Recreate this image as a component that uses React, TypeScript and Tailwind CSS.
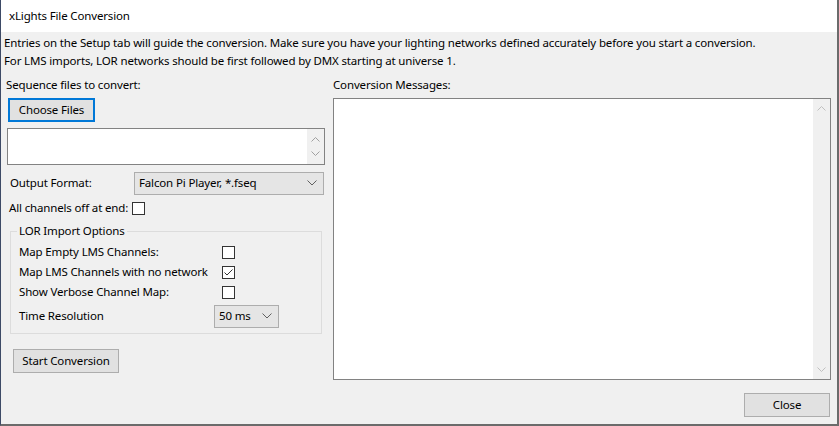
import React from 'react';

function ChevronDown({ className = '' }: { className?: string }) {
  return (
    <svg width="10" height="6" viewBox="0 0 10 6" className={className}>
      <path d="M0.5 0.5 L5 5 L9.5 0.5" fill="none" stroke="#606060" strokeWidth="1" />
    </svg>
  );
}

function ChevronUp({ color = '#a0a0a0' }: { color?: string }) {
  return (
    <svg width="9" height="5" viewBox="0 0 9 5">
      <path d="M0.5 4.5 L4.5 0.5 L8.5 4.5" fill="none" stroke={color} strokeWidth="1" />
    </svg>
  );
}

function ChevronSmallDown({ color = '#a0a0a0' }: { color?: string }) {
  return (
    <svg width="9" height="5" viewBox="0 0 9 5">
      <path d="M0.5 0.5 L4.5 4.5 L8.5 0.5" fill="none" stroke={color} strokeWidth="1" />
    </svg>
  );
}

function CheckBox({ checked = false }: { checked?: boolean }) {
  return (
    <span className="w-[13px] h-[13px] border border-[#333333] bg-white flex items-center justify-center">
      {checked && (
        <svg width="11" height="11" viewBox="0 0 11 11">
          <path d="M1.5 5.5 L4 8 L9.5 2.5" fill="none" stroke="#333333" strokeWidth="1" />
        </svg>
      )}
    </span>
  );
}

function Select({ value, className = '' }: { value: string; className?: string }) {
  return (
    <div
      className={`h-[23px] bg-[#e5e5e5] border border-[#adadad] flex items-center justify-between pl-[4px] pr-[6px] ${className}`}
    >
      <span>{value}</span>
      <ChevronDown />
    </div>
  );
}

const options = [
  { label: 'Map Empty LMS Channels:', checked: false },
  { label: 'Map LMS Channels with no network', checked: true },
  { label: 'Show Verbose Channel Map:', checked: false },
];

export default function App() {
  return (
    <div
      className="w-[839px] h-[426px] flex flex-col bg-[#f0f0f0] border-r-2 border-b-2 border-l border-r-[#6b6b6b] border-b-[#6b6b6b] border-l-[#3d4a66] text-[11.5px] tracking-[-0.15px] text-black"
      style={{ fontFamily: '"Segoe UI", "Noto Sans", sans-serif' }}
    >
      <div className="h-[32px] bg-white flex items-center pl-[8px] shrink-0">xLights File Conversion</div>

      <div className="flex flex-col pl-[3px] pt-[2px]">
        <div className="h-[18px] leading-[18px] whitespace-nowrap">
          Entries on the Setup tab will guide the conversion. Make sure you have your lighting networks defined accurately before you start a conversion.
        </div>
        <div className="h-[18px] leading-[18px]">
          For LMS imports, LOR networks should be first followed by DMX starting at universe 1.
        </div>
      </div>

      <div className="flex flex-1 pt-[7px]">
        <div className="w-[329px] flex flex-col pl-[2px]">
          <div className="h-[16px] leading-[16px] pl-[3px]">Sequence files to convert:</div>
          <div className="pl-[5px] pt-[5px]">
            <button className="w-[87px] h-[24px] bg-[#e1e1e1] border-2 border-[#0078d7] flex items-center justify-center">
              Choose Files
            </button>
          </div>
          <div className="ml-[4px] mt-[6px] w-[318px] h-[37px] bg-white border border-[#828282] flex justify-end">
            <div className="w-[17px] bg-[#f0f0f0] flex flex-col items-center justify-between py-[8px]">
              <ChevronUp />
              <ChevronSmallDown />
            </div>
          </div>

          <div className="flex items-center mt-[6px] h-[24px]">
            <span className="w-[131px] pl-[7px]">Output Format:</span>
            <Select value="Falcon Pi Player, *.fseq" className="w-[190px]" />
          </div>

          <div className="flex items-center mt-[3px] h-[20px] pl-[6px] gap-[4px]">
            <span>All channels off at end:</span>
            <CheckBox />
          </div>

          <div className="relative ml-[7px] mt-[13px] w-[312px] h-[103px] border border-[#dcdcdc]">
            <span className="absolute -top-[10px] left-[6px] px-[2px] bg-[#f0f0f0] leading-[18px]">
              LOR Import Options
            </span>
            <div className="flex flex-col pt-[10px] pl-[8px]">
              {options.map((o) => (
                <div key={o.label} className="flex items-center h-[20px]">
                  <span className="w-[203px] whitespace-nowrap">{o.label}</span>
                  <CheckBox checked={o.checked} />
                </div>
              ))}
              <div className="flex items-center h-[24px] mt-[2px]">
                <span className="w-[195px]">Time Resolution</span>
                <Select value="50 ms" className="w-[65px]" />
              </div>
            </div>
          </div>

          <div className="pl-[10px] pt-[15px]">
            <button className="w-[106px] h-[24px] bg-[#e1e1e1] border border-[#adadad] flex items-center justify-center">
              Start Conversion
            </button>
          </div>
        </div>

        <div className="flex-1 flex flex-col pl-[3px] pr-[6px]">
          <div className="h-[16px] leading-[16px]">Conversion Messages:</div>
          <div className="mt-[5px] h-[282px] bg-white border border-[#828282] flex justify-end">
            <div className="w-[17px] bg-[#f0f0f0] flex flex-col items-center justify-between py-[7px]">
              <ChevronUp color="#c0c0c0" />
              <ChevronSmallDown color="#c0c0c0" />
            </div>
          </div>
          <div className="flex justify-end mt-[13px] pr-[1px] relative">
            <button className="w-[86px] h-[24px] bg-[#e1e1e1] border border-[#adadad] flex items-center justify-center">
              Close
            </button>
          </div>
        </div>
      </div>
    </div>
  );
}
